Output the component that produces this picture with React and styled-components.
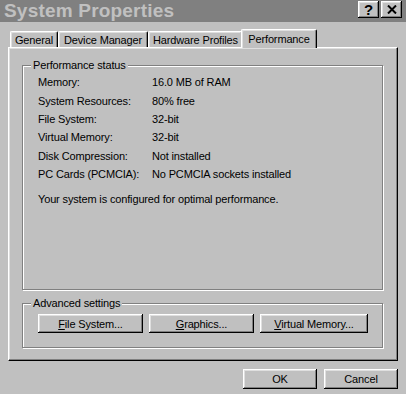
import React from "react";
import styled, { createGlobalStyle } from "styled-components";

const Global = createGlobalStyle`
  html, body { margin: 0; padding: 0; background: #c0c0c0; }
  body { font-family: "Liberation Sans", Arial, sans-serif; font-size: 11px; letter-spacing: -0.15px; color: #000; }
  * { box-sizing: border-box; }
`;

const Window = styled.div`
  width: 406px;
  height: 394px;
  background: #c0c0c0;
  display: flex;
  flex-direction: column;
  overflow: hidden;
`;

const TitleBar = styled.div`
  height: 22px;
  background: #808080;
  display: flex;
  align-items: center;
  justify-content: space-between;
  padding: 0 4px 0 4px;
`;

const Title = styled.div`
  font-family: "Liberation Sans", Arial, sans-serif;
  font-weight: bold;
  font-size: 19px;
  color: #c0c0c0;
  letter-spacing: 0.2px;
`;

const TitleButtons = styled.div`
  display: flex;
  gap: 2px;
  margin-top: -3px;
`;

const raised = `
  box-shadow: inset -1px -1px 0 #000, inset 1px 1px 0 #fff, inset -2px -2px 0 #808080, inset 2px 2px 0 #dfdfdf;
`;

const CaptionButton = styled.div`
  width: 21px;
  height: 17px;
  background: #c0c0c0;
  ${raised}
  display: flex;
  align-items: center;
  justify-content: center;
  font-weight: bold;
  font-size: 15px;
  line-height: 1;
`;

const Body = styled.div`
  padding: 7px 8px 0 8px;
  display: flex;
  flex-direction: column;
`;

const TabStrip = styled.div`
  display: flex;
  align-items: flex-end;
  height: 18px;
  padding-left: 2px;
  position: relative;
  z-index: 1;
`;

const Tab = styled.div`
  width: ${(p) => p.$w}px;
  height: ${(p) => (p.$active ? 19 : 16)}px;
  margin: ${(p) => (p.$active ? "0 0 -1px -2px" : "0")};
  padding-top: ${(p) => (p.$active ? 2 : 1)}px;
  text-align: center;
  background: #c0c0c0;
  border-top: 1px solid #fff;
  border-left: 1px solid #fff;
  border-right: 1px solid #000;
  border-top-left-radius: 2px;
  border-top-right-radius: 2px;
  box-shadow: inset -1px 0 0 #808080, inset 1px 1px 0 #dfdfdf;
  white-space: nowrap;
  line-height: 14px;
  z-index: ${(p) => (p.$active ? 2 : 0)};
`;

const Panel = styled.div`
  height: 314px;
  border-top: 1px solid #fff;
  border-left: 1px solid #fff;
  border-right: 1px solid #000;
  border-bottom: 1px solid #000;
  box-shadow: inset -1px -1px 0 #808080, inset 1px 1px 0 #dfdfdf;
  padding: 17px 14px 0 13px;
  display: flex;
  flex-direction: column;
  gap: 13px;
`;

const GroupBox = styled.div`
  height: ${(p) => p.$h}px;
  border: 1px solid #808080;
  box-shadow: 1px 1px 0 #fff, inset 1px 1px 0 #fff;
  display: flex;
  flex-direction: column;
  padding: 0 0 0 15px;
`;

const Legend = styled.div`
  margin: -7px 0 0 -7px;
  padding: 0 2px;
  width: fit-content;
  background: #c0c0c0;
  line-height: 13px;
  height: 13px;
`;

const InfoList = styled.div`
  display: flex;
  flex-direction: column;
  margin-top: 1px;
`;

const Row = styled.div`
  display: flex;
  height: 18.4px;
  align-items: center;
`;

const Label = styled.div`
  width: 114px;
`;

const Value = styled.div``;

const Note = styled.div`
  margin-top: 10px;
  line-height: 13px;
`;

const ButtonRow = styled.div`
  display: flex;
  gap: 6px;
  margin-top: 4px;
`;

const Button = styled.div`
  width: ${(p) => p.$w}px;
  height: ${(p) => p.$h || 19}px;
  background: #c0c0c0;
  ${raised}
  display: flex;
  align-items: center;
  justify-content: center;
  white-space: nowrap;
  u { text-decoration: underline; text-underline-offset: 1px; }
`;

const Footer = styled.div`
  display: flex;
  justify-content: flex-end;
  gap: 7px;
  padding: 8px 8px 0 0;
`;

export default function App() {
  const rows = [
    ["Memory:", "16.0 MB of RAM"],
    ["System Resources:", "80% free"],
    ["File System:", "32-bit"],
    ["Virtual Memory:", "32-bit"],
    ["Disk Compression:", "Not installed"],
    ["PC Cards (PCMCIA):", "No PCMCIA sockets installed"],
  ];
  const tabs = [
    ["General", 48],
    ["Device Manager", 90],
    ["Hardware Profiles", 95],
    ["Performance", 76, true],
  ];
  return (
    <>
      <Global />
      <Window>
        <TitleBar>
          <Title>System Properties</Title>
          <TitleButtons>
            <CaptionButton>?</CaptionButton>
            <CaptionButton>
              <svg width="10" height="9" viewBox="0 0 10 9">
                <path d="M1 0.5 L9 8.5 M9 0.5 L1 8.5" stroke="#000" strokeWidth="2" fill="none" />
              </svg>
            </CaptionButton>
          </TitleButtons>
        </TitleBar>
        <Body>
          <TabStrip>
            {tabs.map(([t, w, a]) => (
              <Tab key={t} $w={w} $active={a}>{t}</Tab>
            ))}
          </TabStrip>
          <Panel>
            <GroupBox $h={225}>
              <Legend>Performance status</Legend>
              <InfoList>
                {rows.map(([l, v]) => (
                  <Row key={l}>
                    <Label>{l}</Label>
                    <Value>{v}</Value>
                  </Row>
                ))}
              </InfoList>
              <Note>Your system is configured for optimal performance.</Note>
            </GroupBox>
            <GroupBox $h={45}>
              <Legend>Advanced settings</Legend>
              <ButtonRow>
                <Button $w={105}><span><u>F</u>ile System...</span></Button>
                <Button $w={105}><span><u>G</u>raphics...</span></Button>
                <Button $w={108}><span><u>V</u>irtual Memory...</span></Button>
              </ButtonRow>
            </GroupBox>
          </Panel>
        </Body>
        <Footer>
          <Button $w={74} $h={20}>OK</Button>
          <Button $w={74} $h={20}>Cancel</Button>
        </Footer>
      </Window>
    </>
  );
}
